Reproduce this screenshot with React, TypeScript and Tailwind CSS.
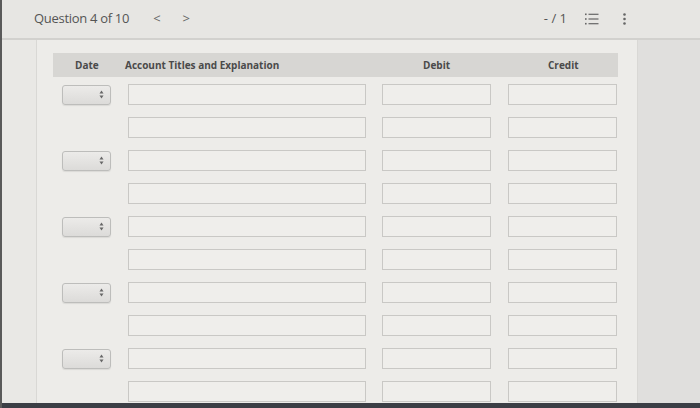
import React from "react";

const rows = Array.from({ length: 10 }, (_, i) => i);

function SelectBox() {
  return (
    <div className="w-[49px] h-[20px] rounded-[3px] border border-[#bdbdbb] bg-gradient-to-b from-[#ecebe9] to-[#dcdbd9] shadow-[0_1px_1px_rgba(0,0,0,0.08)] flex items-center justify-end pr-[6px]">
      <svg width="5" height="9" viewBox="0 0 5 9">
        <path d="M2.5 0.5 L4.5 3.5 L0.5 3.5 Z" fill="#666" />
        <path d="M2.5 8.5 L4.5 5.5 L0.5 5.5 Z" fill="#666" />
      </svg>
    </div>
  );
}

function Field({ w }: { w: string }) {
  return <div className={`${w} h-[21px] border border-[#c9c8c5] bg-[#efeeeb]`} />;
}

export default function App() {
  return (
    <div
      className="w-[700px] h-[408px] flex bg-[#e6e5e2] overflow-hidden"
      style={{ fontFamily: '"Open Sans", "Liberation Sans", sans-serif' }}
    >
      <div className="w-[2px] bg-[#5a5a5a]" />
      <div className="flex-1 flex flex-col">
        <div className="h-[40px] flex items-center bg-[#e7e6e3] border-b-2 border-[#d2d1ce] shrink-0">
          <div className="ml-[32px] text-[13px] text-[#555] tracking-[-0.3px]">Question 4 of 10</div>
          <div className="ml-[24px] text-[13px] text-[#666]">&lt;</div>
          <div className="ml-[22px] text-[13px] text-[#666]">&gt;</div>
          <div className="flex-1" />
          <div className="text-[13px] text-[#555] whitespace-pre">- / 1</div>
          <svg className="ml-[18px]" width="14" height="12" viewBox="0 0 14 12">
            <g fill="#666">
              <rect x="0" y="0.5" width="1.6" height="1.6" />
              <rect x="0" y="5.2" width="1.6" height="1.6" />
              <rect x="0" y="9.9" width="1.6" height="1.6" />
              <rect x="3.5" y="0.7" width="10" height="1.2" />
              <rect x="3.5" y="5.4" width="10" height="1.2" />
              <rect x="3.5" y="10.1" width="10" height="1.2" />
            </g>
          </svg>
          <svg className="ml-[24px] mr-[74px]" width="3" height="12" viewBox="0 0 3 12">
            <g fill="#666">
              <circle cx="1.5" cy="1.5" r="1.3" />
              <circle cx="1.5" cy="6" r="1.3" />
              <circle cx="1.5" cy="10.5" r="1.3" />
            </g>
          </svg>
        </div>
        <div className="flex-1 flex min-h-0">
          <div className="w-[34px] bg-[#e9e8e5]" />
          <div className="w-[602px] bg-[#edece9] border-l border-r border-[#d9d8d5] pl-[16px] pt-[13px] flex flex-col">
            <div className="w-[565px] h-[24px] bg-[#d7d6d3] flex items-center text-[10px] font-bold text-[#4a4a4a]">
              <div className="w-[72px] pl-[22px]">Date</div>
              <div className="w-[298px]">Account Titles and Explanation</div>
              <div className="w-[125px]">Debit</div>
              <div>Credit</div>
            </div>
            <div className="flex flex-col gap-[12px] mt-[7px]">
              {rows.map((i) => (
                <div key={i} className="flex items-center h-[21px]">
                  <div className="w-[58px] pl-[9px]">{i % 2 === 0 ? <SelectBox /> : null}</div>
                  <div className="ml-[17px]">
                    <Field w="w-[238px]" />
                  </div>
                  <div className="ml-[16px]">
                    <Field w="w-[109px]" />
                  </div>
                  <div className="ml-[17px]">
                    <Field w="w-[109px]" />
                  </div>
                </div>
              ))}
            </div>
          </div>
          <div className="flex-1 bg-[#e0dfdd]" />
        </div>
        <div className="h-[5px] bg-[#3b3e45] shrink-0" />
      </div>
    </div>
  );
}
